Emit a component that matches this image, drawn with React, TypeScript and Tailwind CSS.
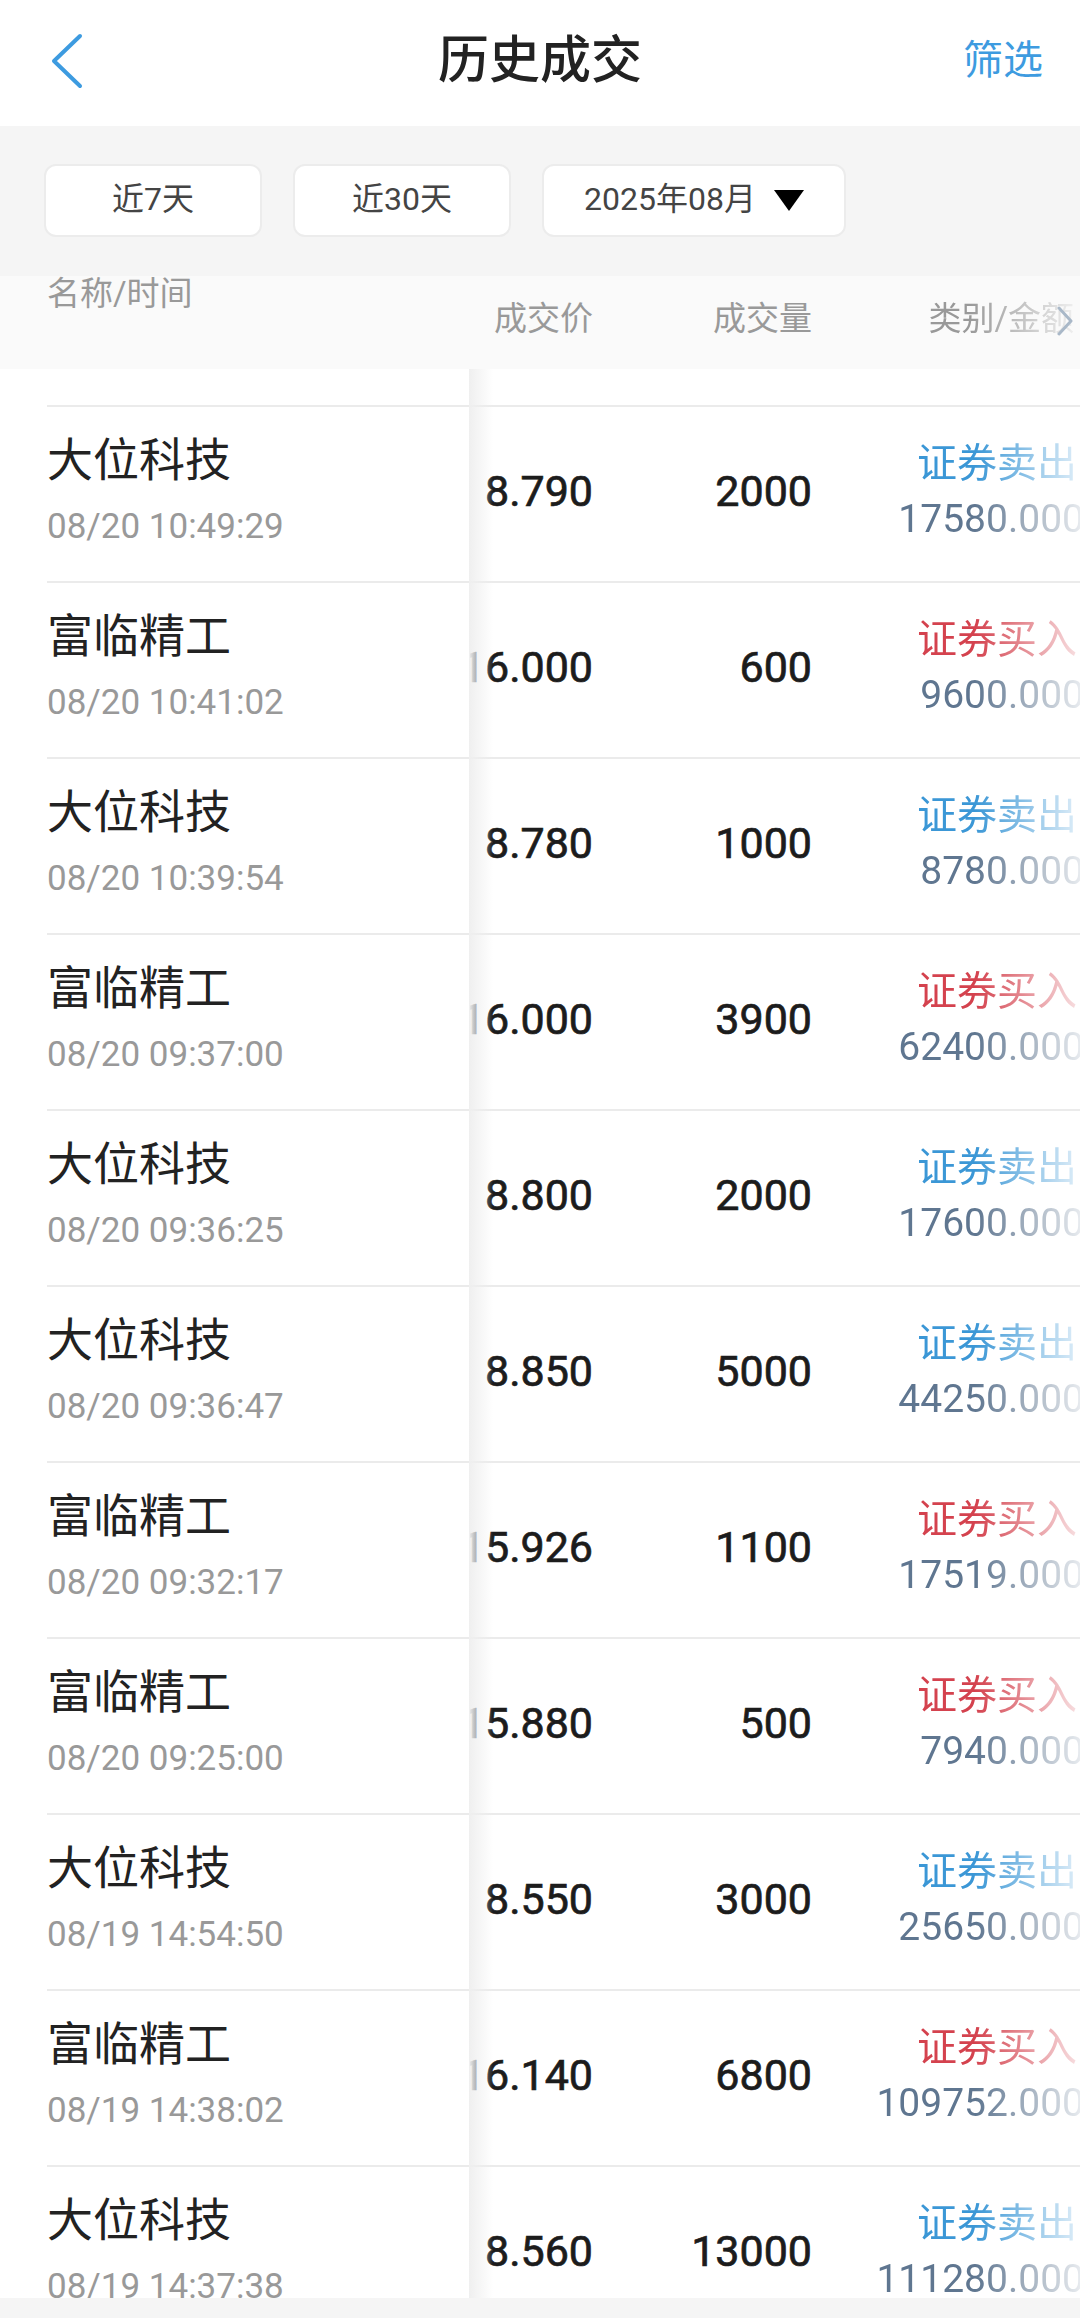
import React from 'react';

type Trade = {
  name: string;
  time: string;
  price: string;
  qty: string;
  side: 'buy' | 'sell';
  amount: string;
};

const trades: Trade[] = [
  { name: '大位科技', time: '08/20 10:49:29', price: '8.790', qty: '2000', side: 'sell', amount: '17580.000' },
  { name: '富临精工', time: '08/20 10:41:02', price: '16.000', qty: '600', side: 'buy', amount: '9600.000' },
  { name: '大位科技', time: '08/20 10:39:54', price: '8.780', qty: '1000', side: 'sell', amount: '8780.000' },
  { name: '富临精工', time: '08/20 09:37:00', price: '16.000', qty: '3900', side: 'buy', amount: '62400.000' },
  { name: '大位科技', time: '08/20 09:36:25', price: '8.800', qty: '2000', side: 'sell', amount: '17600.000' },
  { name: '大位科技', time: '08/20 09:36:47', price: '8.850', qty: '5000', side: 'sell', amount: '44250.000' },
  { name: '富临精工', time: '08/20 09:32:17', price: '15.926', qty: '1100', side: 'buy', amount: '17519.000' },
  { name: '富临精工', time: '08/20 09:25:00', price: '15.880', qty: '500', side: 'buy', amount: '7940.000' },
  { name: '大位科技', time: '08/19 14:54:50', price: '8.550', qty: '3000', side: 'sell', amount: '25650.000' },
  { name: '富临精工', time: '08/19 14:38:02', price: '16.140', qty: '6800', side: 'buy', amount: '109752.000' },
  { name: '大位科技', time: '08/19 14:37:38', price: '8.560', qty: '13000', side: 'sell', amount: '111280.000' },
];

const font = "font-['Roboto','Noto_Sans_CJK_SC',sans-serif]";
const fade = '[mask-image:linear-gradient(to_right,#000_60%,rgba(0,0,0,0.12))]';
// DIN-ish medium weight for the numbers
const num = 'whitespace-nowrap text-[43px] leading-[50px] text-[#1c1c1c] [-webkit-text-stroke:0.7px_#1c1c1c]';

const TradeRow: React.FC<{ t: Trade }> = ({ t }) => (
  <div className="ml-[47px] flex h-[176px] shrink-0 border-t-2 border-[#ebebeb]">
    <div className="relative z-10 flex w-[423px] shrink-0 flex-col justify-center bg-white pb-[8px]">
      <div className="text-[46px] leading-[56px] text-[#222]">{t.name}</div>
      <div className="mt-[17px] text-[35px] leading-[44px] text-[#999]">{t.time}</div>
    </div>
    <div className="flex w-[123px] shrink-0 items-center justify-end pb-[6px]">
      <span className={num}>{t.price}</span>
    </div>
    <div className="flex w-[219px] shrink-0 items-center justify-end pb-[6px]">
      <span className={num}>{t.qty}</span>
    </div>
    <div className={`flex w-[272px] shrink-0 flex-col items-end justify-center pb-[6px] ${fade}`}>
      <div className={`mr-[7px] whitespace-nowrap text-[40px] leading-[48px] ${t.side === 'sell' ? 'text-[#3b97d6]' : 'text-[#d4424e]'}`}>
        {t.side === 'sell' ? '证券卖出' : '证券买入'}
      </div>
      <div className="mt-[7px] whitespace-nowrap text-[39px] leading-[48px] text-[#5f7690]">{t.amount}</div>
    </div>
  </div>
);

const Chip: React.FC<{ w: string; children: React.ReactNode }> = ({ w, children }) => (
  <div className={`flex h-[73px] ${w} items-center justify-center rounded-[12px] border-2 border-[#ececec] bg-white pb-[4px] text-[32px] text-[#444]`}>
    {children}
  </div>
);

export default function App() {
  return (
    <div className={`relative flex h-[2318px] w-[1080px] flex-col overflow-hidden bg-white ${font}`}>
      {/* title bar */}
      <div className="flex h-[126px] shrink-0 items-center pb-[4px]">
        <div className="flex w-[220px] items-center pl-[50px]">
          <svg width="36" height="56" viewBox="0 0 36 56" fill="none">
            <path d="M30 3 L4 28 L30 53" stroke="#3d9be0" strokeWidth="4" strokeLinecap="round" strokeLinejoin="round" />
          </svg>
        </div>
        <div className="flex-1 text-center text-[51px] font-medium text-[#222]">历史成交</div>
        <div className="w-[220px] pr-[37px] text-right text-[40px] text-[#3d9be0]">筛选</div>
      </div>

      {/* quick filters */}
      <div className="flex h-[150px] shrink-0 gap-[31px] bg-[#f5f5f5] pl-[44px] pt-[38px]">
        <Chip w="w-[218px]">近7天</Chip>
        <Chip w="w-[218px]">近30天</Chip>
        <Chip w="w-[304px]">
          <span>2025年08月</span>
          <svg className="ml-[18px] mt-[4px]" width="30" height="21" viewBox="0 0 30 21">
            <path d="M0 0 H30 L15 21 Z" fill="#000" />
          </svg>
        </Chip>
      </div>

      {/* column headers */}
      <div className="flex h-[93px] shrink-0 bg-[#fafafa] text-[33px] leading-[36px] text-[#999]">
        <div className="ml-[47px] w-[423px] shrink-0">名称/时间</div>
        <div className="w-[123px] shrink-0 pt-[25px] text-right">成交价</div>
        <div className="w-[219px] shrink-0 pt-[25px] text-right">成交量</div>
        <div className="relative w-[272px] shrink-0 pt-[25px]">
          <div className={`mr-[10px] whitespace-nowrap text-right ${fade}`}>类别/金额</div>
          <svg className="absolute left-[244px] top-[30px]" width="18" height="30" viewBox="0 0 18 30" fill="none">
            <path d="M3 2 L15 15 L3 28" stroke="#a9b8c8" strokeWidth="3" strokeLinecap="round" strokeLinejoin="round" />
          </svg>
        </div>
      </div>

      {/* list */}
      <div className="relative flex flex-1 flex-col overflow-hidden">
        <div className="h-[36px] shrink-0" />
        {trades.map((t, i) => (
          <TradeRow key={i} t={t} />
        ))}
        <div className="pointer-events-none absolute bottom-0 left-[469px] top-0 z-20 w-[24px] bg-linear-to-r from-[#efefef] to-transparent" />
      </div>

      <div className="h-[20px] shrink-0 bg-[#f5f5f5]" />
    </div>
  );
}
